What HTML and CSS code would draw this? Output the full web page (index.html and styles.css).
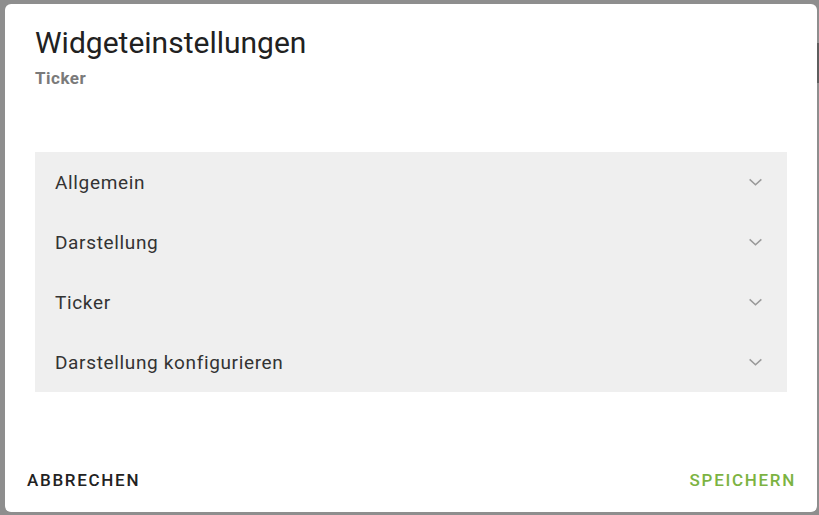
FILE: index.html
```html
<!DOCTYPE html>
<html lang="de">
<head>
<meta charset="UTF-8">
<meta name="viewport" content="width=device-width, initial-scale=1.0">
<title>Widgeteinstellungen</title>
<link rel="stylesheet" href="styles.css">
</head>
<body>

<div class="backdrop">
  <div class="scroll-edge"></div>

  <!-- Widget settings dialog -->
  <section class="dialog">
    <header class="dialog-header">
      <h1>Widgeteinstellungen</h1>
      <p class="subtitle">Ticker</p>
    </header>

    <div class="dialog-content">
      <div class="panels">
        <div class="panel">
          <span>Allgemein</span>
          <svg class="chevron" viewBox="0 0 16 10"><path d="M1.5 1.5 L8 7.5 L14.5 1.5"/></svg>
        </div>
        <div class="panel">
          <span>Darstellung</span>
          <svg class="chevron" viewBox="0 0 16 10"><path d="M1.5 1.5 L8 7.5 L14.5 1.5"/></svg>
        </div>
        <div class="panel">
          <span>Ticker</span>
          <svg class="chevron" viewBox="0 0 16 10"><path d="M1.5 1.5 L8 7.5 L14.5 1.5"/></svg>
        </div>
        <div class="panel">
          <span>Darstellung konfigurieren</span>
          <svg class="chevron" viewBox="0 0 16 10"><path d="M1.5 1.5 L8 7.5 L14.5 1.5"/></svg>
        </div>
      </div>
    </div>

    <footer class="dialog-actions">
      <button class="btn">Abbrechen</button>
      <button class="btn btn-primary">Speichern</button>
    </footer>
  </section>
</div>

</body>
</html>
```

FILE: styles.css
```css
/* General styles */
html,
body {
  margin: 0;
  padding: 0;
  height: 100%;
}

body {
  font-family: Roboto, 'Liberation Sans', Arial, sans-serif;
  background-color: #8e8e8e;
  overflow: hidden;
}

.backdrop {
  height: 515px;
  padding: 4px 2px 3px 5px;
  box-sizing: border-box;
  position: relative;
}

/* dark scrollbar thumb peeking out at the right edge */
.scroll-edge {
  position: absolute;
  right: 0;
  top: 43px;
  width: 2px;
  height: 40px;
  background-color: #5e5e5e;
}

/* Dialog */
.dialog {
  height: 100%;
  background-color: #fff;
  border-radius: 6px;
  display: flex;
  flex-direction: column;
}

.dialog-header {
  padding: 20px 30px 0;
}

.dialog-header h1 {
  margin: 0;
  font-size: 30px;
  font-weight: 400;
  line-height: 38px;
  color: #212121;
}

.subtitle {
  margin: 6px 0 0;
  font-size: 17px;
  font-weight: 700;
  letter-spacing: 0.5px;
  color: #7a7a7a;
}

.dialog-content {
  flex: 1;
  padding: 64px 30px 0;
}

.panels {
  background-color: #efefef;
}

.panel {
  height: 60px;
  padding: 0 24px 0 20px;
  display: flex;
  align-items: center;
  justify-content: space-between;
  font-size: 19px;
  color: #333;
  letter-spacing: 0.65px;
}

.chevron {
  width: 15px;
  height: 9px;
  fill: none;
  stroke: #9a9a9a;
  stroke-width: 1.7;
}

/* Actions */
.dialog-actions {
  display: flex;
  justify-content: space-between;
  padding: 0 13px 12px 14px;
}

.btn {
  font-family: Roboto, 'Liberation Sans', Arial, sans-serif;
  background: none;
  border: none;
  padding: 10px 8px;
  font-size: 17px;
  font-weight: 500;
  letter-spacing: 1.7px;
  text-transform: uppercase;
  color: #222;
  cursor: pointer;
}

.btn-primary {
  color: #7cb342;
}
```
